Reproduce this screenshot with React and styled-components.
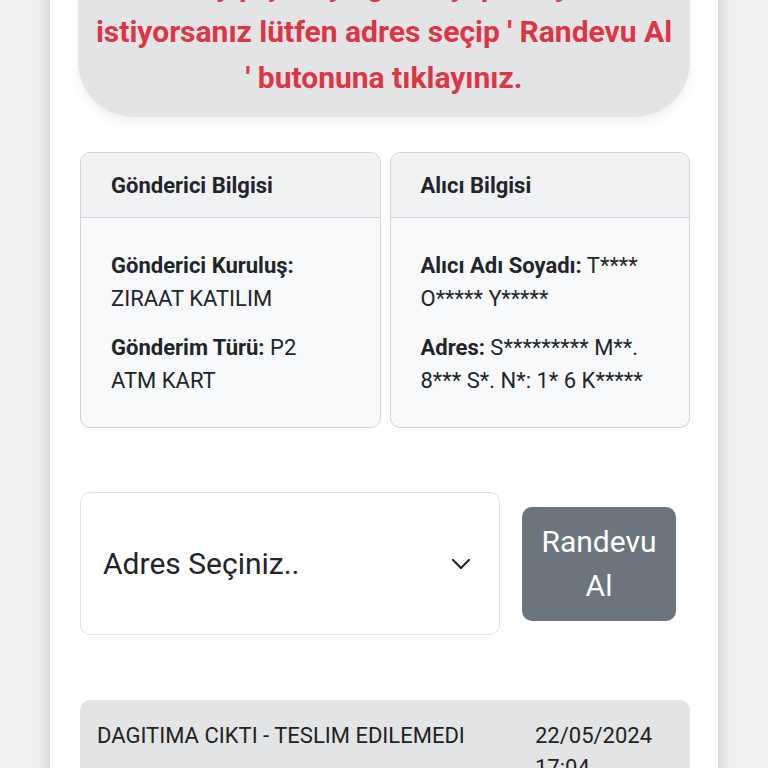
import React from 'react'
import styled, { createGlobalStyle } from 'styled-components'

const GlobalStyle = createGlobalStyle`
  * { box-sizing: border-box; }
  body {
    margin: 0;
    background: #efefef;
    font-family: Roboto, "Noto Sans", Arial, sans-serif;
    color: #212529;
  }
`

const Page = styled.div`
  width: 668px;
  margin: -127px auto 0;
  min-height: 1000px;
  background: #fff;
  padding: 28px 28px 40px 28px;
  box-shadow: 0 0 12px rgba(0, 0, 0, 0.18);
`

const Notice = styled.div`
  background: #e3e4e6;
  border-radius: 56px;
  padding: 16px 12px;
  text-align: center;
  color: #dc3545;
  font-weight: 700;
  font-size: 30px;
  line-height: 46px;
  box-shadow: 0 6px 10px rgba(0, 0, 0, 0.06);
`

const CardRow = styled.div`
  display: grid;
  grid-template-columns: 1fr 1fr;
  gap: 9px;
  margin: 35px 0 0 2px;
`

const Card = styled.div`
  border: 1px solid #d3d5d8;
  border-radius: 10px;
  background: #f8f9fa;
  overflow: hidden;
`

const CardHeader = styled.div`
  background: #f1f2f4;
  border-bottom: 1px solid #d3d5d8;
  height: 65px;
  padding: 0 30px;
  display: flex;
  align-items: center;
  font-size: 22px;
  font-weight: 700;
`

const CardBody = styled.div`
  padding: 31px 20px 30px 30px;
  font-size: 22px;
  line-height: 33px;
`

const Field = styled.p`
  margin: 0 0 16px;
  &:last-child { margin-bottom: 0; }
  b { font-weight: 700; }
`

const ActionRow = styled.div`
  display: flex;
  align-items: center;
  gap: 22px;
  margin: 64px 0 0 2px;
`

const Select = styled.div`
  width: 420px;
  height: 143px;
  background: #fff;
  border: 1px solid #e1e3e6;
  border-radius: 10px;
  display: flex;
  align-items: center;
  justify-content: space-between;
  padding: 0 28px 0 22px;
  font-size: 30px;
  color: #212529;
`

const Button = styled.button`
  width: 154px;
  height: 114px;
  border: none;
  border-radius: 10px;
  background: #6c757d;
  color: #fff;
  font-family: inherit;
  font-size: 30px;
  line-height: 44px;
  padding: 0 18px;
  text-align: center;
`

const History = styled.div`
  margin: 65px 0 0 2px;
  background: #e3e4e6;
  border-radius: 10px;
  padding: 20px 18px 20px 17px;
  display: flex;
  justify-content: space-between;
  font-size: 22px;
  line-height: 32px;
  color: #222;
`

const Status = styled.span``

const DateText = styled.span`
  width: 137px;
`

const Chevron = () => (
  <svg width="20" height="12" viewBox="0 0 20 12" fill="none">
    <path d="M2 2l8 8 8-8" stroke="#212529" strokeWidth="2.2" strokeLinecap="round" strokeLinejoin="round" />
  </svg>
)

const App = () => {
  return (
    <>
      <GlobalStyle />
      <Page>
        <Notice>
          Gönderinizi teslim almak için bir gün<br />
          belirleyip şubeye gelmeyi planlıyor ve<br />
          istiyorsanız lütfen adres seçip ' Randevu Al<br />
          ' butonuna tıklayınız.
        </Notice>

        <CardRow>
          <Card>
            <CardHeader>Gönderici Bilgisi</CardHeader>
            <CardBody>
              <Field><b>Gönderici Kuruluş:</b><br />ZIRAAT KATILIM</Field>
              <Field><b>Gönderim Türü:</b> P2<br />ATM KART</Field>
            </CardBody>
          </Card>
          <Card>
            <CardHeader>Alıcı Bilgisi</CardHeader>
            <CardBody>
              <Field><b>Alıcı Adı Soyadı:</b> T**** O***** Y*****</Field>
              <Field><b>Adres:</b> S********* M**. 8*** S*. N*: 1* 6 K*****</Field>
            </CardBody>
          </Card>
        </CardRow>

        <ActionRow>
          <Select>
            <span>Adres Seçiniz..</span>
            <Chevron />
          </Select>
          <Button>Randevu Al</Button>
        </ActionRow>

        <History>
          <Status>DAGITIMA CIKTI - TESLIM EDILEMEDI</Status>
          <DateText>22/05/2024 17:04</DateText>
        </History>
      </Page>
    </>
  )
}

export default App
